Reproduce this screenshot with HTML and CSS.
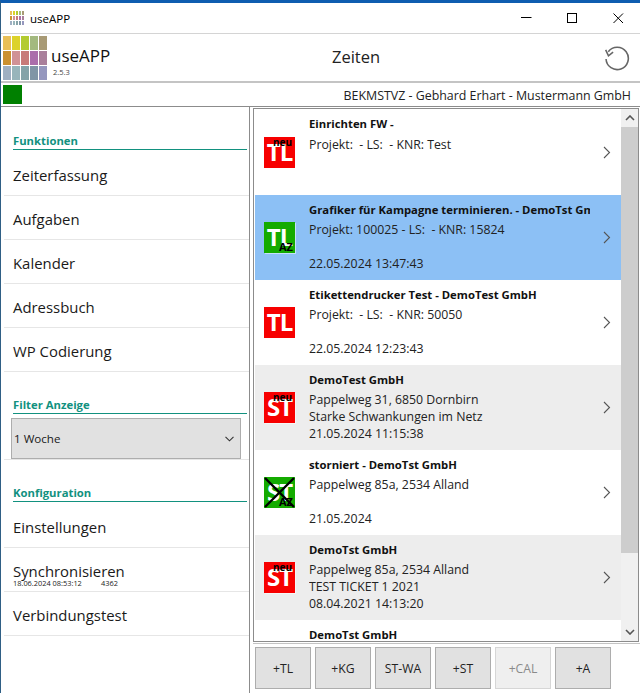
FILE: index.html
```html
<!DOCTYPE html>
<html lang="de">

<head>
    <meta charset="UTF-8">
    <meta name="viewport" content="width=device-width, initial-scale=1.0">
    <title>useAPP</title>
    <link rel="stylesheet" href="styles.css">
</head>

<body>
    <div class="window">
        <div class="titlebar">
            <div class="swatches swatches-small">
                <i></i><i></i><i></i><i></i><i></i>
                <i></i><i></i><i></i><i></i><i></i>
                <i></i><i></i><i></i><i></i><i></i>
            </div>
            <span class="titlebar-name">useAPP</span>
            <div class="window-buttons">
                <svg width="12" height="12" viewBox="0 0 12 12"><path d="M1 5.5h10.5" stroke="#000" fill="none"/></svg>
                <svg width="12" height="12" viewBox="0 0 12 12"><rect x="1.5" y="1.5" width="9" height="9" stroke="#000" fill="none"/></svg>
                <svg width="12" height="12" viewBox="0 0 12 12"><path d="M1.5 1.5l9.5 9.5M11 1.5l-9.5 9.5" stroke="#000" fill="none"/></svg>
            </div>
        </div>

        <header class="app-header">
            <div class="swatches swatches-large">
                <i></i><i></i><i></i><i></i><i></i>
                <i></i><i></i><i></i><i></i><i></i>
                <i></i><i></i><i></i><i></i><i></i>
            </div>
            <div class="brand">
                <div class="brand-name">useAPP</div>
                <div class="brand-version">2.5.3</div>
            </div>
            <div class="page-title">Zeiten</div>
            <svg class="refresh" width="26" height="26" viewBox="0 0 28 28">
                <path d="M4.6 7.2A12 12 0 1 1 2.2 15" stroke="#666" stroke-width="1.7" fill="none"/>
                <path d="M1.8 5.2l3 6.4 5-3.9" stroke="#666" stroke-width="1.7" fill="none"/>
            </svg>
        </header>

        <div class="statusbar">
            <div class="status-light"></div>
            <div class="status-text">BEKMSTVZ - Gebhard Erhart - Mustermann GmbH</div>
        </div>

        <div class="content">
            <nav class="sidebar">
                <h2 class="section section-first">Funktionen</h2>
                <a class="nav-row">Zeiterfassung</a>
                <a class="nav-row">Aufgaben</a>
                <a class="nav-row">Kalender</a>
                <a class="nav-row">Adressbuch</a>
                <a class="nav-row">WP Codierung</a>

                <h2 class="section">Filter Anzeige</h2>
                <div class="filter-row">
                    <div class="filter-select">
                        <span>1 Woche</span>
                        <svg width="9" height="6" viewBox="0 0 9 6"><path d="M.5 .8l4 4 4-4" stroke="#333" stroke-width="1.1" fill="none"/></svg>
                    </div>
                </div>

                <h2 class="section">Konfiguration</h2>
                <a class="nav-row">Einstellungen</a>
                <a class="nav-row">
                    Synchronisieren
                    <span class="sync-info"><span>18.06.2024 08:53:12</span><span>4362</span></span>
                </a>
                <a class="nav-row">Verbindungstest</a>
            </nav>

            <main class="main">
                <div class="list-box">
                    <div class="list">
                        <div class="item">
                            <div class="badge badge-red">TL<span class="tag tag-top">neu</span></div>
                            <div class="item-text">
                                <div class="item-title">Einrichten FW -</div>
                                <div class="item-line">Projekt:&nbsp; - LS:&nbsp; - KNR: Test</div>
                            </div>
                            <svg class="chevron" width="8" height="13" viewBox="0 0 8 13"><path d="M1 1l5.5 5.5-5.5 5.5" stroke="#555" stroke-width="1.1" fill="none"/></svg>
                        </div>
                        <div class="item item-selected">
                            <div class="badge badge-green">TL<span class="tag tag-bottom">AZ</span></div>
                            <div class="item-text">
                                <div class="item-title">Grafiker für Kampagne terminieren. - DemoTst GmbH</div>
                                <div class="item-line">Projekt: 100025 - LS:&nbsp; - KNR: 15824</div>
                                <div class="item-line">&nbsp;</div>
                                <div class="item-line">22.05.2024 13:47:43</div>
                            </div>
                            <svg class="chevron" width="8" height="13" viewBox="0 0 8 13"><path d="M1 1l5.5 5.5-5.5 5.5" stroke="#555" stroke-width="1.1" fill="none"/></svg>
                        </div>
                        <div class="item">
                            <div class="badge badge-red">TL</div>
                            <div class="item-text">
                                <div class="item-title">Etikettendrucker Test - DemoTest GmbH</div>
                                <div class="item-line">Projekt:&nbsp; - LS:&nbsp; - KNR: 50050</div>
                                <div class="item-line">&nbsp;</div>
                                <div class="item-line">22.05.2024 12:23:43</div>
                            </div>
                            <svg class="chevron" width="8" height="13" viewBox="0 0 8 13"><path d="M1 1l5.5 5.5-5.5 5.5" stroke="#555" stroke-width="1.1" fill="none"/></svg>
                        </div>
                        <div class="item item-grey">
                            <div class="badge badge-red">ST<span class="tag tag-top">neu</span></div>
                            <div class="item-text">
                                <div class="item-title">DemoTest GmbH</div>
                                <div class="item-line">Pappelweg 31, 6850 Dornbirn</div>
                                <div class="item-line">Starke Schwankungen im Netz</div>
                                <div class="item-line">21.05.2024 11:15:38</div>
                            </div>
                            <svg class="chevron" width="8" height="13" viewBox="0 0 8 13"><path d="M1 1l5.5 5.5-5.5 5.5" stroke="#555" stroke-width="1.1" fill="none"/></svg>
                        </div>
                        <div class="item">
                            <div class="badge badge-green">ST<span class="tag tag-bottom">AZ</span>
                                <svg class="cross" width="31" height="31" viewBox="0 0 31 31"><path d="M1 1l29 29M30 1l-29 29" stroke="#000" stroke-width="2.4" fill="none"/></svg>
                            </div>
                            <div class="item-text">
                                <div class="item-title">storniert - DemoTst GmbH</div>
                                <div class="item-line">Pappelweg 85a, 2534 Alland</div>
                                <div class="item-line">&nbsp;</div>
                                <div class="item-line">21.05.2024</div>
                            </div>
                            <svg class="chevron" width="8" height="13" viewBox="0 0 8 13"><path d="M1 1l5.5 5.5-5.5 5.5" stroke="#555" stroke-width="1.1" fill="none"/></svg>
                        </div>
                        <div class="item item-grey">
                            <div class="badge badge-red">ST<span class="tag tag-top">neu</span></div>
                            <div class="item-text">
                                <div class="item-title">DemoTst GmbH</div>
                                <div class="item-line">Pappelweg 85a, 2534 Alland</div>
                                <div class="item-line">TEST TICKET 1 2021</div>
                                <div class="item-line">08.04.2021 14:13:20</div>
                            </div>
                            <svg class="chevron" width="8" height="13" viewBox="0 0 8 13"><path d="M1 1l5.5 5.5-5.5 5.5" stroke="#555" stroke-width="1.1" fill="none"/></svg>
                        </div>
                        <div class="item">
                            <div class="item-text item-text-cut">
                                <div class="item-title">DemoTst GmbH</div>
                            </div>
                        </div>
                    </div>
                    <div class="scrollbar">
                        <svg width="10" height="6" viewBox="0 0 10 6"><path d="M1 5l4-4 4 4" stroke="#555" stroke-width="1.6" fill="none"/></svg>
                        <div class="scroll-track"><div class="scroll-thumb"></div></div>
                        <svg width="10" height="6" viewBox="0 0 10 6"><path d="M1 1l4 4 4-4" stroke="#555" stroke-width="1.6" fill="none"/></svg>
                    </div>
                </div>
                <div class="toolbar">
                    <button class="tool">+TL</button>
                    <button class="tool">+KG</button>
                    <button class="tool">ST-WA</button>
                    <button class="tool">+ST</button>
                    <button class="tool tool-off">+CAL</button>
                    <button class="tool">+A</button>
                </div>
            </main>
        </div>
    </div>
</body>

</html>
```

FILE: styles.css
```css
* {
    margin: 0;
    padding: 0;
    box-sizing: border-box;
}

body {
    width: 640px;
    height: 693px;
    overflow: hidden;
    background: #fff;
    font-family: "Open Sans", "Noto Sans", sans-serif;
    color: #1a1a1a;
}

.window {
    height: 693px;
    display: flex;
    flex-direction: column;
    border-top: 3px solid #0f5db0;
    border-left: 1px solid #2f5f85;
}

/* Title bar */
.titlebar {
    height: 31px;
    flex: none;
    display: flex;
    align-items: center;
    padding-left: 9px;
    border-bottom: 1px solid #d4d4d4;
}

.titlebar-name {
    margin-left: 6px;
    font-size: 11.5px;
    color: #000;
}

.window-buttons {
    margin-left: auto;
    display: flex;
    gap: 34px;
    padding-right: 16px;
}

/* Colour logo */
.swatches {
    display: grid;
    flex: none;
}

.swatches-small {
    grid-template-columns: repeat(5, 2px);
    grid-template-rows: repeat(3, 4px);
    gap: 1px;
    margin-top: -1px;
}

.swatches-large {
    grid-template-columns: repeat(5, 8px);
    grid-template-rows: repeat(3, 14px);
    gap: 1px;
}

.swatches i:nth-child(1) { background: #e8bf58; }
.swatches i:nth-child(2) { background: #dcd22a; }
.swatches i:nth-child(3) { background: #b3cb30; }
.swatches i:nth-child(4) { background: #a3b97f; }
.swatches i:nth-child(5) { background: #a89a75; }
.swatches i:nth-child(6) { background: #cb9130; }
.swatches i:nth-child(7) { background: #d09296; }
.swatches i:nth-child(8) { background: #c87a78; }
.swatches i:nth-child(9) { background: #ab6eab; }
.swatches i:nth-child(10) { background: #a97f9b; }
.swatches i:nth-child(11) { background: #9fb0c2; }
.swatches i:nth-child(12) { background: #98b5bb; }
.swatches i:nth-child(13) { background: #85a3a8; }
.swatches i:nth-child(14) { background: #8095a6; }
.swatches i:nth-child(15) { background: #9597be; }

/* App header */
.app-header {
    height: 49px;
    flex: none;
    position: relative;
    display: flex;
    align-items: center;
    padding-left: 2px;
    border-bottom: 2px solid #c4c4c4;
}

.brand {
    margin-left: 4px;
    padding-top: 6px;
}

.brand-name {
    font-size: 17px;
    line-height: 22px;
    color: #111;
}

.brand-version {
    font-size: 7.5px;
    line-height: 10px;
    margin-left: 2px;
    color: #444;
}

.page-title {
    position: absolute;
    left: 331px;
    top: 12px;
    font-size: 16.5px;
    line-height: 22px;
    color: #222;
}

.refresh {
    margin-left: auto;
    margin-right: 10px;
}

/* Status bar */
.statusbar {
    height: 24px;
    flex: none;
    display: flex;
    align-items: center;
    justify-content: space-between;
    padding: 0 9px 0 2px;
    border-bottom: 1px solid #8c8c8c;
}

.status-light {
    width: 19px;
    height: 19px;
    background: #008000;
}

.status-text {
    padding-top: 2px;
    font-size: 12.4px;
    color: #222;
}

/* Main split */
.content {
    flex: 1;
    min-height: 0;
    display: flex;
}

.sidebar {
    width: 249px;
    flex: none;
    border-right: 1px solid #8c8c8c;
    padding-left: 12px;
    padding-right: 2px;
}

.section {
    font-size: 11.3px;
    font-weight: 700;
    line-height: 15px;
    color: #12917f;
    border-bottom: 1px solid #12917f;
    height: 18px;
    padding-top: 1px;
    margin-top: 24px;
    margin-bottom: 2px;
}

.section-first {
    margin-top: 25px;
}

.nav-row {
    display: block;
    height: 44px;
    margin-left: -9px;
    margin-right: -2px;
    padding-left: 9px;
    font-size: 14.9px;
    line-height: 46px;
    color: #1a1a1a;
    border-bottom: 1px solid #e6e6e6;
    overflow: hidden;
    position: relative;
}

.sync-info {
    position: absolute;
    left: 9px;
    top: 31px;
    width: 105px;
    display: flex;
    justify-content: space-between;
    font-size: 7.4px;
    line-height: 9px;
    color: #222;
}

.filter-row {
    height: 46px;
    margin-top: -2px;
    margin-left: -9px;
    margin-right: -2px;
    padding: 4px 0 0 7px;
    border-bottom: 1px solid #e6e6e6;
}

.filter-select {
    width: 230px;
    height: 41px;
    display: flex;
    align-items: center;
    justify-content: space-between;
    padding: 0 6px 0 2px;
    background: #e1e1e1;
    border: 1px solid #adadad;
    font-size: 11.6px;
}

/* Ticket list */
.main {
    flex: 1;
    min-width: 0;
    display: flex;
    flex-direction: column;
    padding: 1px 0 0 3px;
}

.list-box {
    height: 534px;
    flex: none;
    margin-right: 1px;
    display: flex;
    border: 1px solid #8c8c8c;
    overflow: hidden;
}

.list {
    flex: 1;
    min-width: 0;
    padding-left: 1px;
    overflow: hidden;
}

.item {
    height: 85px;
    display: flex;
    align-items: center;
    padding-left: 9px;
    padding-right: 9px;
}

.item:first-child {
    height: 86px;
}

.item:first-child .item-title {
    margin-bottom: 4px;
}

.item-selected {
    background: #8cc0f5;
}

.item-grey {
    background: #ededed;
}

.badge {
    width: 31px;
    height: 31px;
    flex: none;
    position: relative;
    text-align: center;
    font-size: 24px;
    font-weight: 700;
    line-height: 30px;
    letter-spacing: -1px;
    color: #fff;
    box-shadow: 1px 1px 0 rgba(255, 255, 255, 0.5);
    overflow: hidden;
}

.badge-red {
    background: #f70000;
}

.badge-green {
    background: #14ab00;
}

.tag {
    position: absolute;
    font-size: 10px;
    font-weight: 700;
    line-height: 10px;
    letter-spacing: 0;
    color: #000;
}

.tag-top {
    top: 0;
    right: 3px;
}

.tag-bottom {
    bottom: 1px;
    right: 2px;
    font-size: 11px;
}

.cross {
    position: absolute;
    left: 0;
    top: 0;
}

.item-text {
    width: 281px;
    flex: none;
    align-self: flex-start;
    margin-left: 14px;
    padding-top: 7px;
    overflow: hidden;
    white-space: nowrap;
}

.item-text-cut {
    margin-left: 45px;
}

.item-title {
    font-size: 11.3px;
    font-weight: 700;
    line-height: 16px;
    margin-bottom: 3px;
    color: #111;
}

.item-line {
    font-size: 12.3px;
    line-height: 17px;
    color: #222;
}

.chevron {
    margin-left: 13px;
    flex: none;
}

/* Scrollbar */
.scrollbar {
    width: 17px;
    flex: none;
    display: flex;
    flex-direction: column;
    align-items: center;
    background: #f0f0f0;
    padding: 6px 0;
    gap: 6px;
}

.scroll-track {
    flex: 1;
    width: 100%;
}

.scroll-thumb {
    height: 426px;
    background: #cdcdcd;
}

/* Bottom buttons */
.toolbar {
    flex: 1;
    margin-top: 1px;
    padding: 3px 0 0 2px;
    display: flex;
    gap: 4px;
    border-top: 1px solid #c4c4c4;
}

.tool {
    width: 56px;
    height: 42px;
    background: #e1e1e1;
    border: 1px solid #adadad;
    font-family: inherit;
    font-size: 12.2px;
    color: #222;
}

.tool-off {
    background: #efefef;
    border-color: #d6d6d6;
    color: #8a8a8a;
}
```
